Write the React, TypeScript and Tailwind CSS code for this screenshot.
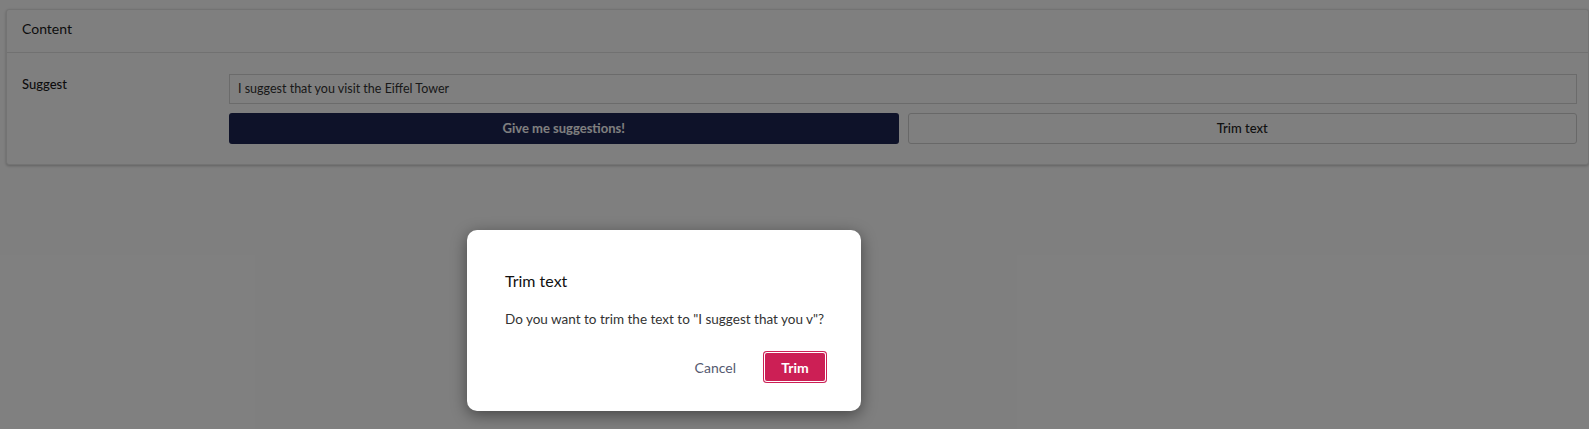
import React from "react";

export default function App() {
  return (
    <div className="relative h-[429px] w-full overflow-hidden bg-white font-['Lato','Noto_Sans',sans-serif]">
      <div className="pl-[6px] pt-[9px]">
        <div className="w-[1583px] rounded-[3px] border border-[#e6e6e6] bg-white shadow-[0_1px_3px_rgba(0,0,0,0.25)]">
          <div className="flex h-[43px] items-center border-b border-[#e2e2e2] pb-[6px] pl-[15px] text-[14px] text-[#1a1a1a]">
            Content
          </div>
          <div className="flex pb-[20px] pl-[15px] pr-[11px] pt-[21px]">
            <div className="w-[207px] shrink-0 pt-[1px] text-[13px] font-medium text-[#1a1a1a]">Suggest</div>
            <div className="flex flex-1 flex-col gap-[9px]">
              <div className="flex h-[30px] items-center border border-[#d6d6d6] px-[8px] text-[12.5px] text-[#333]">
                I suggest that you visit the Eiffel Tower
              </div>
              <div className="grid grid-cols-2 gap-[9px]">
                <button className="h-[31px] rounded-[3px] bg-[#1c2452] text-[13px] font-bold text-white">
                  Give me suggestions!
                </button>
                <button className="h-[31px] rounded-[3px] border border-[#d0d0d0] bg-white text-[13px] font-medium text-[#222]">
                  Trim text
                </button>
              </div>
            </div>
          </div>
        </div>
      </div>

      <div className="absolute inset-0 bg-black/50" />

      <div className="absolute left-[467px] top-[230px] h-[181px] w-[394px] rounded-[10px] bg-white pl-[38px] pr-[34px] pt-[40px] shadow-[0_4px_16px_rgba(0,0,0,0.45)]">
        <div className="text-[16px] leading-[22px] text-[#111]">Trim text</div>
        <div className="mt-[17px] whitespace-nowrap text-[13.5px] leading-[20px] text-[#333]">
          Do you want to trim the text to "I suggest that you v"?
        </div>
        <div className="mt-[22px] flex items-center justify-end gap-[27px]">
          <button className="text-[14px] text-[#555a70]">Cancel</button>
          <button className="h-[32px] w-[64px] rounded-[4px] bg-[#cc1f55] text-[14px] font-bold text-white shadow-[inset_0_0_0_1px_#cc1f55,inset_0_0_0_2px_#ffffff]">
            Trim
          </button>
        </div>
      </div>
    </div>
  );
}
